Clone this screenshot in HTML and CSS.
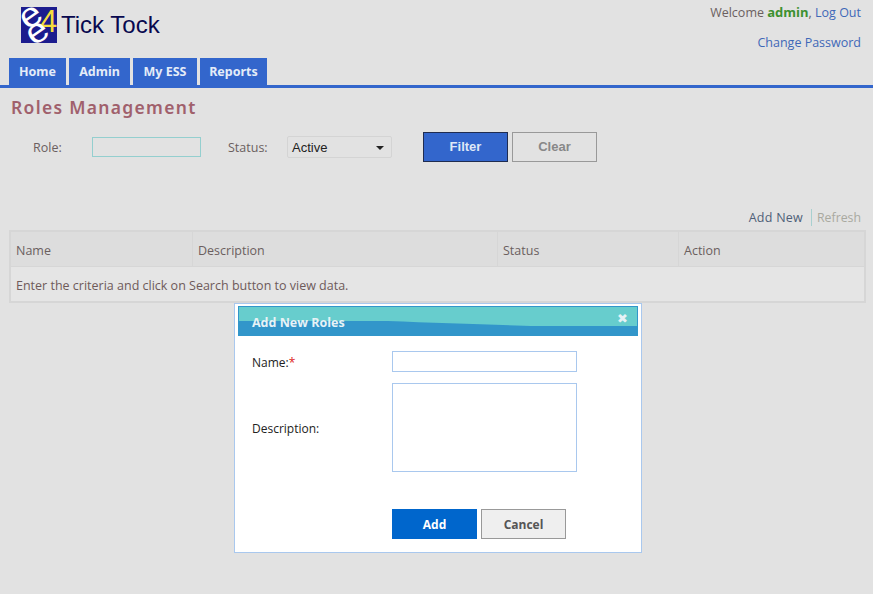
FILE: index.html
```html
<!DOCTYPE html>
<html lang="en">
<head>
    <meta charset="UTF-8">
    <meta name="viewport" content="width=device-width, initial-scale=1.0">
    <title>Roles Management</title>
    <link rel="stylesheet" href="styles.css">
</head>
<body>
    <header class="top">
        <div class="brand">
            <svg class="logo" width="36" height="36" viewBox="0 0 36 36">
                <rect width="36" height="36" fill="#1c1c8e"/>
                <text class="logo-four" x="19" y="25">4</text>
                <text class="logo-e" transform="translate(10.5 10.5) rotate(-35) scale(1.12 1)" y="8.5">e</text>
                <text class="logo-e" transform="translate(17 26.5) rotate(-35) scale(1.12 1)" y="8.5">e</text>
            </svg>
            <span class="brand-name">Tick Tock</span>
        </div>
        <div class="user">
            <p>Welcome <strong>admin</strong>, <a href="#">Log Out</a></p>
            <p><a href="#">Change Password</a></p>
        </div>
    </header>

    <nav class="tabs">
        <a href="#">Home</a>
        <a href="#">Admin</a>
        <a href="#">My ESS</a>
        <a href="#">Reports</a>
    </nav>

    <main class="content">
        <h1>Roles Management</h1>

        <form class="filter">
            <label class="role-label" for="role">Role:</label>
            <input type="text" id="role" class="role-input">
            <label class="status-label" for="status">Status:</label>
            <div class="select" id="status">
                <span>Active</span>
                <i class="caret"></i>
            </div>
            <button type="button" class="btn-filter">Filter</button>
            <button type="button" class="btn-clear">Clear</button>
        </form>

        <div class="toolbar">
            <a href="#" class="add-new">Add New</a>
            <a href="#" class="refresh">Refresh</a>
        </div>

        <table class="grid">
            <thead>
                <tr>
                    <th class="col-name">Name</th>
                    <th class="col-desc">Description</th>
                    <th class="col-status">Status</th>
                    <th>Action</th>
                </tr>
            </thead>
            <tbody>
                <tr>
                    <td colspan="4">Enter the criteria and click on Search button to view data.</td>
                </tr>
            </tbody>
        </table>
    </main>

    <div class="modal">
        <div class="modal-head">
            <svg class="wave" width="400" height="30" viewBox="0 0 400 30" preserveAspectRatio="none">
                <rect width="400" height="30" fill="#3296ca"/>
                <path d="M1 1H399V20H300C260 19 200 17 150 15H1Z" fill="#67cdcd"/>
            </svg>
            <span class="modal-title">Add New Roles</span>
            <span class="modal-close">&#10006;</span>
        </div>
        <form class="modal-form">
            <label for="name">Name:<em>*</em></label>
            <input type="text" id="name">
            <label for="desc">Description:</label>
            <textarea id="desc"></textarea>
            <div class="modal-actions">
                <button type="button" class="btn-add">Add</button>
                <button type="button" class="btn-cancel">Cancel</button>
            </div>
        </form>
    </div>
</body>
</html>
```

FILE: styles.css
```css
body {
    margin: 0;
    height: 594px;
    overflow: hidden;
    background-color: #e2e2e2;
    font-family: 'Open Sans', sans-serif;
    font-size: 12.5px;
    color: #6b5f5f;
}

a {
    text-decoration: none;
}

/* header */
.top {
    display: flex;
    justify-content: space-between;
    height: 58px;
}

.brand {
    display: flex;
    align-items: center;
    gap: 4px;
    height: 36px;
    margin: 7px 0 0 21px;
}

.logo {
    display: block;
    overflow: visible;
}

.logo-e {
    font-family: 'Liberation Sans', sans-serif;
    font-size: 34px;
    fill: #fff;
    text-anchor: middle;
}

.logo-four {
    font-family: 'Liberation Sans', sans-serif;
    font-size: 31px;
    fill: #f6dc3c;
}

.brand-name {
    font-family: 'Liberation Sans', sans-serif;
    font-size: 24px;
    color: #08084f;
}

.user {
    padding: 4px 12px 0 0;
    text-align: right;
}

.user p {
    margin: 0 0 13px;
    line-height: 17px;
}

.user strong {
    color: #3d9130;
    font-size: 13px;
}

.user a {
    color: #3f68b8;
}

/* tabs */
.tabs {
    display: grid;
    grid-template-columns: 57px 61px 64px 67px;
    gap: 3px;
    height: 27px;
    padding-left: 9px;
    border-bottom: 3px solid #3366cc;
}

.tabs a {
    background-color: #3366cc;
    color: #e4ecf8;
    font-family: 'Noto Sans', sans-serif;
    font-size: 12.5px;
    font-weight: bold;
    line-height: 28px;
    text-align: center;
}

/* page */
.content {
    padding: 0 7px 0 10px;
}

h1 {
    margin: 8px 0 0 1px;
    color: #a0606c;
    font-family: 'Noto Sans', sans-serif;
    font-size: 17.5px;
    font-weight: 600;
    letter-spacing: 1.3px;
    line-height: 23px;
}

.filter {
    display: flex;
    align-items: center;
    height: 30px;
    margin-top: 13px;
}

.role-label {
    margin-left: 23px;
    width: 59px;
}

.role-input {
    box-sizing: border-box;
    width: 109px;
    height: 20px;
    padding: 0;
    border: 1px solid #94cfcf;
    background: transparent;
}

.status-label {
    width: 59px;
    margin-left: 27px;
}

.select {
    display: flex;
    align-items: center;
    justify-content: space-between;
    box-sizing: border-box;
    width: 105px;
    height: 22px;
    padding: 1px 4px 0;
    border: 1px solid #d4d4d4;
    border-radius: 2px;
    color: #222;
    font-family: 'Liberation Sans', sans-serif;
    font-size: 13px;
}

.caret {
    width: 0;
    height: 0;
    margin-right: 3px;
    border-top: 4px solid #222;
    border-left: 4px solid transparent;
    border-right: 4px solid transparent;
}

.filter button {
    box-sizing: border-box;
    width: 85px;
    height: 30px;
    padding: 0 0 2px;
    font-family: 'Liberation Sans', sans-serif;
    font-size: 13px;
    font-weight: bold;
}

.btn-filter {
    margin-left: 31px;
    border: 1px solid #1f2c50;
    background-color: #3366cc;
    color: #dfe8f7;
}

.filter .btn-clear {
    margin-left: 4px;
    border: 1px solid #999;
    background-color: #e2e2e2;
    color: #888;
}

.toolbar {
    display: flex;
    justify-content: flex-end;
    align-items: center;
    height: 18px;
    margin-top: 46px;
    padding-right: 5px;
}

.add-new {
    padding-right: 8px;
    border-right: 1px solid #a8d0d0;
    color: #4f5f78;
    letter-spacing: 0.25px;
}

.refresh {
    padding-left: 5px;
    color: #a9a9a0;
    font-size: 12.3px;
}

.grid {
    box-sizing: border-box;
    width: 857px;
    height: 73px;
    margin: 4px 0 0 -1px;
    border: 2px solid #d6d6d6;
    border-collapse: collapse;
    table-layout: fixed;
    background-color: #e5e5e5;
}

.grid th {
    height: 31px;
    padding: 3px 5px 0;
    border: 1px solid #d6d6d6;
    background-color: #dddddd;
    font-weight: normal;
    text-align: left;
}

.grid td {
    padding: 3px 5px 0;
    color: #6e5a5a;
}

.col-name {
    width: 171px;
}

.col-desc {
    width: 294px;
}

.col-status {
    width: 170px;
}

/* popup */
.modal {
    position: absolute;
    top: 303px;
    left: 234px;
    box-sizing: border-box;
    width: 408px;
    height: 250px;
    padding: 2px 3px 3px;
    border: 1px solid #a9c8ee;
    background-color: #fff;
    color: #222;
    font-size: 12px;
}

.modal-head {
    position: relative;
    height: 30px;
}

.wave {
    display: block;
}

.modal-title {
    position: absolute;
    top: 8px;
    left: 14px;
    color: #e6f2f6;
    font-size: 12.5px;
    font-weight: bold;
}

.modal-close {
    position: absolute;
    top: 5px;
    right: 10px;
    color: #e6f2f6;
    font-family: 'DejaVu Sans', sans-serif;
    font-size: 13px;
}

.modal-form {
    display: grid;
    grid-template-columns: 140px 185px;
    grid-template-rows: 21px 89px;
    row-gap: 11px;
    align-items: center;
    padding: 15px 0 0 14px;
}

.modal-form label {
    padding-top: 2px;
}

.modal-form em {
    color: #d22;
    font-style: normal;
}

.modal-form input,
.modal-form textarea {
    box-sizing: border-box;
    display: block;
    width: 185px;
    margin: 0;
    padding: 0;
    border: 1px solid #a9c8ee;
    background-color: #fff;
    resize: none;
}

.modal-form input {
    height: 21px;
}

.modal-form textarea {
    height: 89px;
}

.modal-actions {
    grid-column: 2;
    display: flex;
    gap: 4px;
    margin-top: 26px;
    width: 220px;
}

.modal-actions button {
    box-sizing: border-box;
    width: 85px;
    height: 30px;
    padding: 0;
    font-family: 'Open Sans', sans-serif;
    font-size: 12px;
    font-weight: bold;
}

.btn-add {
    border: none;
    background-color: #0066cc;
    color: #fff;
}

.btn-cancel {
    border: 1px solid #999;
    background-color: #efefef;
    color: #555;
}
```
